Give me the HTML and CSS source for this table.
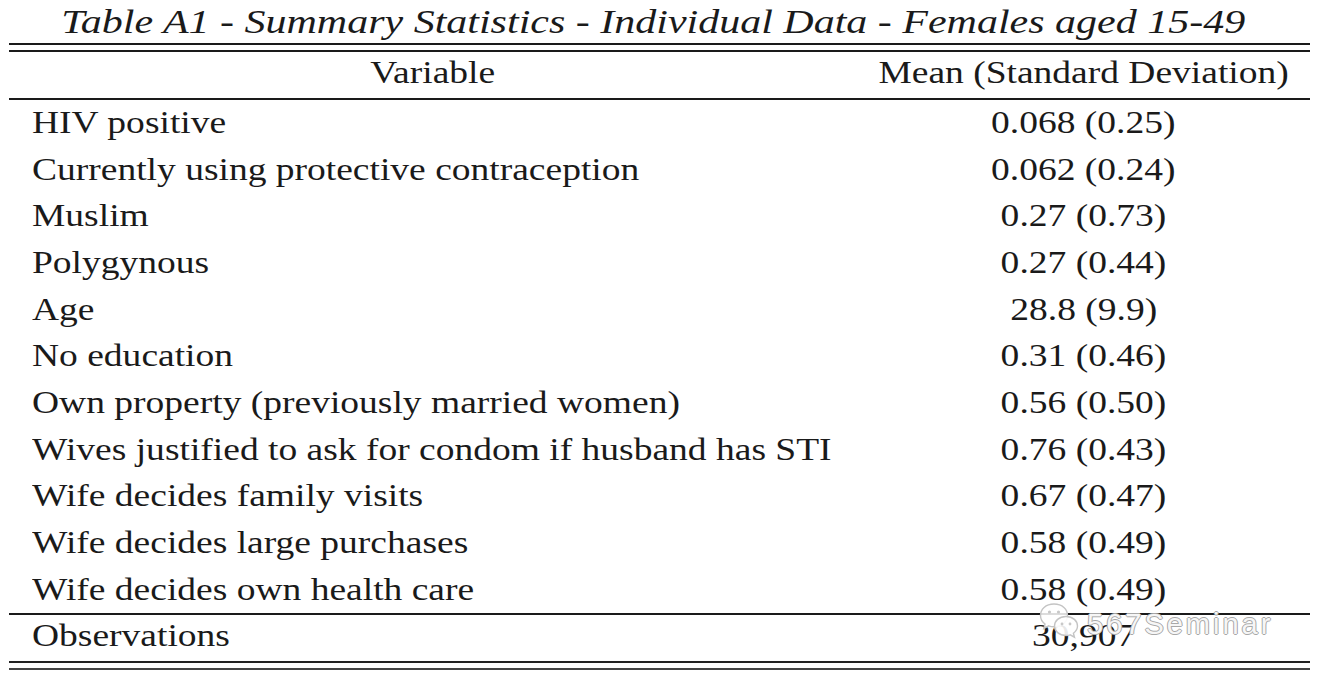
FILE: index.html
```html
<!DOCTYPE html>
<html>
<head>
<meta charset="utf-8">
<title>Table A1 - Summary Statistics</title>
<link rel="stylesheet" href="styles.css">
</head>
<body>
<div class="page">
  <h1 class="title"><span class="t">Table A1 - Summary Statistics - Individual Data - Females aged 15-49</span></h1>
  <div class="rule-double"></div>
  <div class="grid head">
    <div class="cell var-head"><span class="t">Variable</span></div>
    <div class="cell val"><span class="t">Mean (Standard Deviation)</span></div>
  </div>
  <div class="rule"></div>
  <div class="grid body">
    <div class="cell var"><span class="t">HIV positive</span></div><div class="cell val"><span class="t">0.068 (0.25)</span></div>
    <div class="cell var"><span class="t">Currently using protective contraception</span></div><div class="cell val"><span class="t">0.062 (0.24)</span></div>
    <div class="cell var"><span class="t">Muslim</span></div><div class="cell val"><span class="t">0.27 (0.73)</span></div>
    <div class="cell var"><span class="t">Polygynous</span></div><div class="cell val"><span class="t">0.27 (0.44)</span></div>
    <div class="cell var"><span class="t">Age</span></div><div class="cell val"><span class="t">28.8 (9.9)</span></div>
    <div class="cell var"><span class="t">No education</span></div><div class="cell val"><span class="t">0.31 (0.46)</span></div>
    <div class="cell var"><span class="t">Own property (previously married women)</span></div><div class="cell val"><span class="t">0.56 (0.50)</span></div>
    <div class="cell var"><span class="t">Wives justified to ask for condom if husband has STI</span></div><div class="cell val"><span class="t">0.76 (0.43)</span></div>
    <div class="cell var"><span class="t">Wife decides family visits</span></div><div class="cell val"><span class="t">0.67 (0.47)</span></div>
    <div class="cell var"><span class="t">Wife decides large purchases</span></div><div class="cell val"><span class="t">0.58 (0.49)</span></div>
    <div class="cell var"><span class="t">Wife decides own health care</span></div><div class="cell val"><span class="t">0.58 (0.49)</span></div>
  </div>
  <div class="rule"></div>
  <div class="grid foot">
    <div class="cell var"><span class="t">Observations</span></div>
    <div class="cell val obs"><span class="t">30,907</span>
      <div class="watermark">
        <svg class="wm-icon" width="42" height="40" viewBox="0 0 42 40" aria-hidden="true">
          <path d="M15 2 C6.5 2 1.5 7.5 1.5 13.5 C1.5 17 3.3 20 6 22 L4.8 26.5 L9.6 23.8 C11.3 24.4 13.1 24.7 15 24.7 C23.5 24.7 28.5 19.3 28.5 13.5 C28.5 7.5 23.5 2 15 2 Z" fill="rgba(255,255,255,0.85)" stroke="#c4c4c4" stroke-width="1.4"/>
          <circle cx="10.5" cy="10" r="1.6" fill="#c8c8c8"/>
          <circle cx="19.5" cy="10" r="1.6" fill="#c8c8c8"/>
          <path d="M27 14.5 C20 14.5 15.5 19 15.5 24 C15.5 29 20 33.5 27 33.5 C28.5 33.5 29.9 33.3 31.2 32.8 L35.5 35.2 L34.4 31.2 C36.8 29.5 38.5 27 38.5 24 C38.5 19 34 14.5 27 14.5 Z" fill="rgba(255,255,255,0.9)" stroke="#c4c4c4" stroke-width="1.4"/>
          <circle cx="23" cy="22" r="1.4" fill="#c8c8c8"/>
          <circle cx="31" cy="22" r="1.4" fill="#c8c8c8"/>
        </svg>
        <span class="wm-text">567Seminar</span>
      </div>
    </div>
  </div>
  <div class="rule-double bottom"></div>
</div>
</body>
</html>
```
FILE: styles.css
```css
html, body {
  margin: 0;
  padding: 0;
  background: #ffffff;
}

.page {
  width: 1301px;
  margin-left: 9px;
  color: #1a1a1a;
  font-family: "Liberation Serif", "Times New Roman", serif;
  font-size: 31px;
}

.t {
  display: inline-block;
  white-space: nowrap;
  transform: scaleX(1.21);
  transform-origin: center;
}

.var .t {
  transform-origin: left center;
}

.title {
  margin: 0 0 0 -13px;
  padding: 2px 0 1px 0;
  height: 40px;
  line-height: 40px;
  font-size: 34px;
  font-weight: normal;
  font-style: italic;
  text-align: center;
  white-space: nowrap;
}

.title .t {
  transform: scaleX(1.235);
}

.rule-double {
  height: 5px;
  border-top: 2px solid #1a1a1a;
  border-bottom: 2px solid #1a1a1a;
}

.rule-double.bottom {
  margin-top: 2px;
  border-top-color: #222;
  border-bottom-color: #444;
}

.rule {
  height: 2px;
  background: #1a1a1a;
}

.grid {
  display: grid;
  grid-template-columns: 848px 1fr;
}

.cell {
  white-space: nowrap;
}

.head .cell {
  line-height: 42px;
  padding-bottom: 4px;
}

.body .cell {
  line-height: 46.67px;
  height: 46.67px;
}

.foot .cell {
  line-height: 42px;
  padding-bottom: 2px;
  height: 42px;
}

.var {
  padding-left: 23px;
}

.var-head {
  text-align: center;
}

.val {
  text-align: center;
}

.obs {
  position: relative;
}

.watermark {
  position: absolute;
  left: 182px;
  top: -13px;
  display: flex;
  align-items: center;
  gap: 6px;
  pointer-events: none;
}

.wm-text {
  font-family: "Liberation Sans", Arial, sans-serif;
  font-size: 29px;
  letter-spacing: 3px;
  line-height: 32px;
  color: rgba(255, 255, 255, 0.92);
  text-shadow: 1px 0 0 #a8a8a8, -1px 0 0 #a8a8a8, 0 1px 0 #a8a8a8, 0 -1px 0 #a8a8a8;
  margin-top: 4px;
}
```
